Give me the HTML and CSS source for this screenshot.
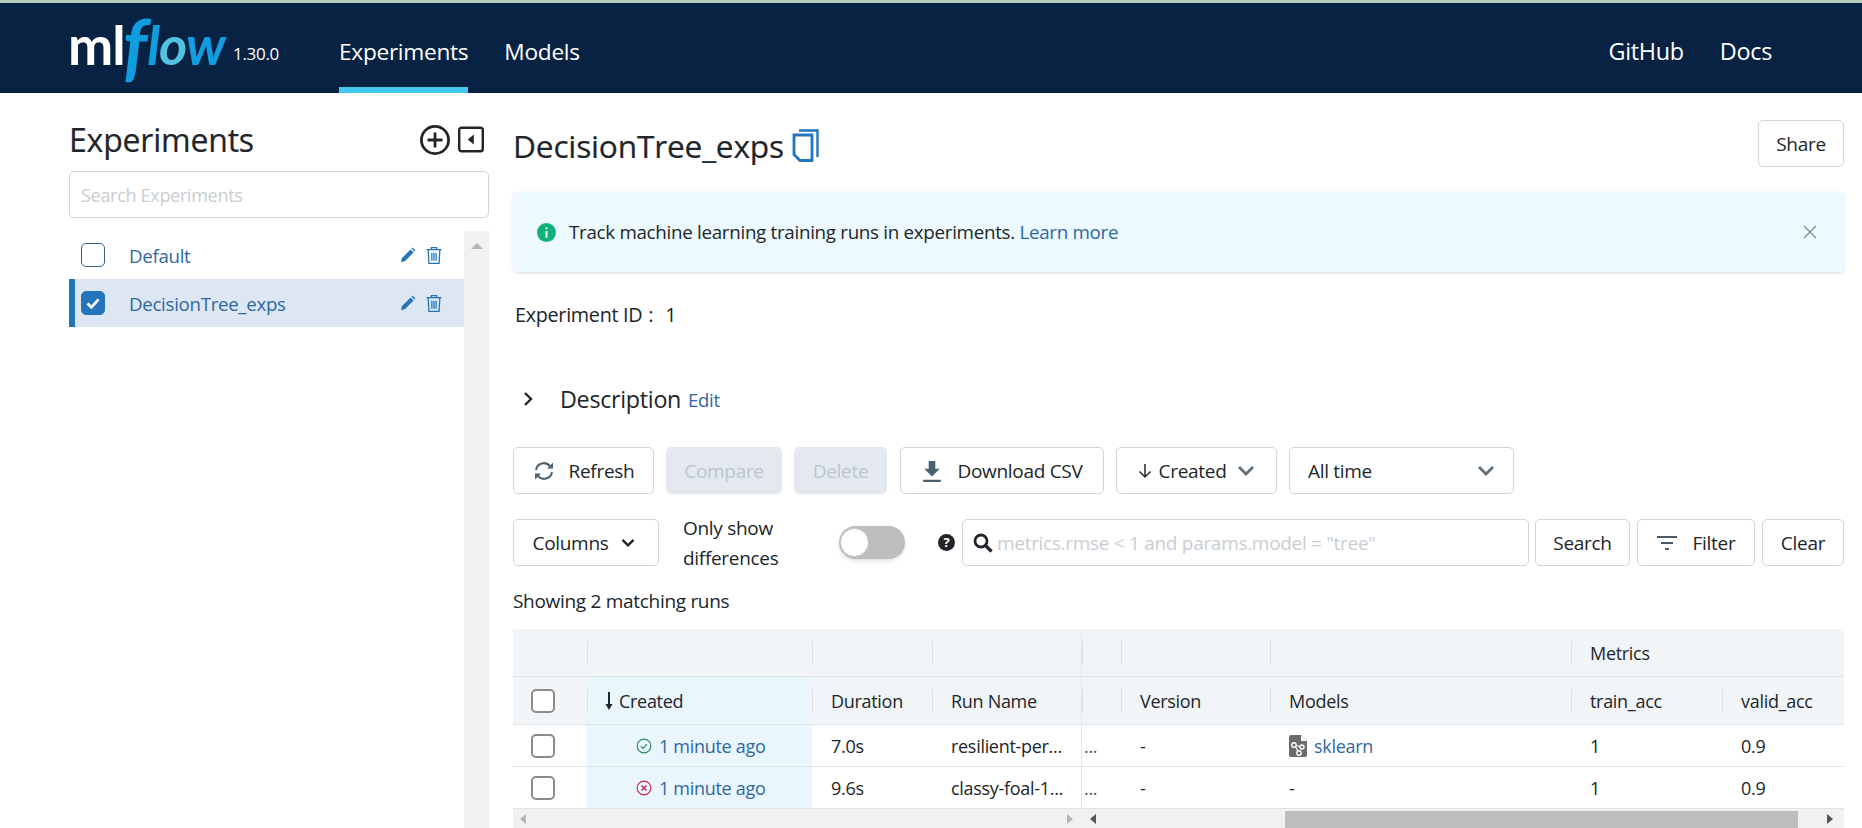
FILE: index.html
```html
<!DOCTYPE html>
<html lang="en">
<head>
<meta charset="utf-8">
<title>MLflow</title>
<link rel="stylesheet" href="styles.css">
</head>
<body>
<header class="topbar">
  <div class="logo"><span class="logo-ml">ml</span><span class="logo-f">f</span><span class="logo-low">l<span class="logo-o">o</span>w</span></div>
  <span class="version">1.30.0</span>
  <nav class="nav-left">
    <a class="nav-item active">Experiments</a>
    <a class="nav-item">Models</a>
  </nav>
  <nav class="nav-right">
    <a class="nav-item">GitHub</a>
    <a class="nav-item">Docs</a>
  </nav>
</header>
<div class="page">
  <aside class="sidebar">
    <div class="side-head">
      <h2 class="side-title">Experiments</h2>
      <div class="side-tools">
        <svg class="ic-plus" viewBox="0 0 30 30"><circle cx="15" cy="15" r="13.600" fill="none" stroke="#212529" stroke-width="2.800"/><path d="M15 7.500v15M7.500 15h15" stroke="#212529" stroke-width="2.800" fill="none"/></svg>
        <svg class="ic-collapse" viewBox="0 0 28 28"><rect x="1.300" y="1.300" width="25.400" height="25.400" rx="2.500" fill="none" stroke="#212529" stroke-width="2.600"/><path d="M17 8.500v11L10.500 14z" fill="#212529"/></svg>
      </div>
    </div>
    <div class="side-search">Search Experiments</div>
    <div class="side-list">
      <div class="side-rows">
        <div class="side-row">
          <span class="cb"></span><a class="side-name">Default</a>
          <svg class="ic-pencil" viewBox="0 0 16 16"><path d="M1 15l.8-3.800L10.600 2.400l3 3L4.800 14.200zM11.500 1.500l1-1 3 3-1 1z" fill="#2374bb"/></svg>
          <svg class="ic-trash" viewBox="0.500 1 15 16"><path d="M5.500 3V1.500h5V3M1 3.500h14M2.500 3.500l.7 13h9.600l.7-13M6 6.500v7.500M8 6.500v7.500M10 6.500v7.500" fill="none" stroke="#2374bb" stroke-width="1.200"/></svg>
        </div>
        <div class="side-row selected">
          <span class="cb checked"><svg viewBox="0 0 24 24"><path d="M6 12.500l4.200 4.200L18 8" fill="none" stroke="#fff" stroke-width="3"/></svg></span><a class="side-name">DecisionTree_exps</a>
          <svg class="ic-pencil" viewBox="0 0 16 16"><path d="M1 15l.8-3.800L10.600 2.400l3 3L4.800 14.200zM11.500 1.500l1-1 3 3-1 1z" fill="#2374bb"/></svg>
          <svg class="ic-trash" viewBox="0.500 1 15 16"><path d="M5.500 3V1.500h5V3M1 3.500h14M2.500 3.500l.7 13h9.600l.7-13M6 6.500v7.500M8 6.500v7.500M10 6.500v7.500" fill="none" stroke="#2374bb" stroke-width="1.200"/></svg>
        </div>
      </div>
      <div class="side-scroll"><span class="arrow-up"></span></div>
    </div>
  </aside>
  <main class="main">
    <div class="title-row">
      <h1 class="exp-title">DecisionTree_exps</h1>
      <svg class="ic-copy" viewBox="0 0 27 34"><path d="M7 2.500h18.500V29" fill="none" stroke="#2374bb" stroke-width="2.400"/><path d="M2 7h18v25.500H8L2 26.500z" fill="none" stroke="#2374bb" stroke-width="2.800"/></svg>
      <button class="btn share">Share</button>
    </div>
    <div class="alert">
      <svg class="ic-info" viewBox="0 0 20 20"><circle cx="10" cy="10" r="10" fill="#0fb27a"/><path d="M10 4.500v2M10 8.500v7" stroke="#fff" stroke-width="2" fill="none"/></svg>
      <span>Track machine learning training runs in experiments. <a class="link">Learn more</a></span>
      <svg class="ic-x" viewBox="0 0 14 14"><path d="M1 1l12 12M13 1L1 13" stroke="#7c8a90" stroke-width="1.300" fill="none"/></svg>
    </div>
    <div class="exp-id">Experiment ID<span class="exp-id-colon">:</span><span class="exp-id-val">1</span></div>
    <div class="desc">
      <svg class="ic-chev-r" viewBox="0 0 10 16"><path d="M2 2l6 6-6 6" fill="none" stroke="#212529" stroke-width="2.400"/></svg>
      <span class="desc-title">Description</span><a class="link desc-edit">Edit</a>
    </div>
    <div class="toolbar one">
      <button class="btn b-refresh"><svg class="ic-18" viewBox="0 0 22 22"><path d="M3 10a8 8 0 0 1 14-4M19 12a8 8 0 0 1-14 4" fill="none" stroke="#4a6272" stroke-width="2"/><path d="M20 2.500v6h-6zM2 19.500v-6h6z" fill="#4a6272"/></svg>Refresh</button>
      <button class="btn disabled b-compare">Compare</button>
      <button class="btn disabled b-delete">Delete</button>
      <button class="btn b-download"><svg class="ic-18" viewBox="0 0 20 20"><path d="M7 1h6v7h4l-7 7-7-7h4zM2 18h16v2H2z" fill="#4a6272"/></svg>Download CSV</button>
      <button class="btn b-created"><svg class="ic-down" viewBox="0 0 14 16"><path d="M7 1v13M1.500 8.500L7 14l5.500-5.500" fill="none" stroke="#212529" stroke-width="1.500"/></svg>Created<svg class="ic-caret" viewBox="0 0 18 12"><path d="M2 2l7 7 7-7" fill="none" stroke="#5f6f7c" stroke-width="2.800"/></svg></button>
      <button class="btn b-time"><span>All time</span><svg class="ic-caret" viewBox="0 0 18 12"><path d="M2 2l7 7 7-7" fill="none" stroke="#5f6f7c" stroke-width="2.800"/></svg></button>
    </div>
    <div class="toolbar two">
      <button class="btn b-columns">Columns<svg class="ic-caret small" viewBox="0 0 18 12"><path d="M2 2l7 7 7-7" fill="none" stroke="#212529" stroke-width="3"/></svg></button>
      <div class="only-show">Only show<br>differences</div>
      <span class="toggle"><span class="knob"></span></span>
      <span class="help">?</span>
      <div class="search-box">
        <svg class="ic-search" viewBox="0 0 20 20"><circle cx="8" cy="8" r="6" fill="none" stroke="#212529" stroke-width="2.800"/><path d="M12.500 12.500l6 6" stroke="#212529" stroke-width="3.200"/></svg>
        <span class="placeholder">metrics.rmse &lt; 1 and params.model = "tree"</span>
      </div>
      <button class="btn b-search">Search</button>
      <button class="btn b-filter"><svg class="ic-filter" viewBox="0 0 20 14"><path d="M0 1h20M4 7h12M8 13h4" stroke="#4a5a66" stroke-width="2" fill="none"/></svg>Filter</button>
      <button class="btn b-clear">Clear</button>
    </div>
    <div class="showing">Showing 2 matching runs</div>
    <div class="grid">
      <div class="c h1"></div><div class="c h1 sep"></div><div class="c h1 sep"></div><div class="c h1 sep pin"></div>
      <div class="c h1 sep"></div><div class="c h1 sep"></div><div class="c h1 sep"></div><div class="c h1 sep txt">Metrics</div><div class="c h1"></div>

      <div class="c h2 boxcell"><span class="box"></span></div>
      <div class="c h2 sep created-h"><svg class="ic-sort" viewBox="0 0 8 18"><path d="M4 0v15" stroke="#212529" stroke-width="2"/><path d="M0.500 12h7L4 18z" fill="#212529"/></svg>Created</div>
      <div class="c h2 sep txt">Duration</div>
      <div class="c h2 sep txt pin">Run Name</div>
      <div class="c h2 sep"></div>
      <div class="c h2 sep txt">Version</div>
      <div class="c h2 sep txt">Models</div>
      <div class="c h2 sep txt">train_acc</div>
      <div class="c h2 sep txt">valid_acc</div>

      <div class="c r boxcell"><span class="box"></span></div>
      <div class="c r created-c"><svg class="ic-status" viewBox="0 0 16 16"><circle cx="8" cy="8" r="6.800" fill="none" stroke="#2d8a55" stroke-width="1.200"/><path d="M4.800 8.200l2.200 2.200 4-4.200" fill="none" stroke="#2d8a55" stroke-width="1.200"/></svg><a class="link">1 minute ago</a></div>
      <div class="c r txt">7.0s</div>
      <div class="c r txt pin">resilient-per...</div>
      <div class="c r dots">...</div>
      <div class="c r txt">-</div>
      <div class="c r txt"><svg class="ic-model" viewBox="0 0 18 22"><path d="M2 0h10l6 6v14a2 2 0 0 1-2 2H2a2 2 0 0 1-2-2V2a2 2 0 0 1 2-2z" fill="#6b6b6b"/><path d="M12 0v6h6" fill="#fff"/><circle cx="5" cy="10" r="2.200" fill="none" stroke="#fff" stroke-width="1.400"/><circle cx="13" cy="12" r="2" fill="none" stroke="#fff" stroke-width="1.400"/><circle cx="10" cy="18" r="2.200" fill="none" stroke="#fff" stroke-width="1.400"/><path d="M6.500 11.500l2.500 5M7 10.500l4 1" stroke="#fff" stroke-width="1.200"/></svg><a class="link">sklearn</a></div>
      <div class="c r txt">1</div>
      <div class="c r txt">0.9</div>

      <div class="c r boxcell"><span class="box"></span></div>
      <div class="c r created-c"><svg class="ic-status" viewBox="0 0 16 16"><circle cx="8" cy="8" r="6.800" fill="none" stroke="#c8284f" stroke-width="1.200"/><path d="M5.500 5.500l5 5M10.500 5.500l-5 5" fill="none" stroke="#c8284f" stroke-width="1.500"/></svg><a class="link">1 minute ago</a></div>
      <div class="c r txt">9.6s</div>
      <div class="c r txt pin">classy-foal-1...</div>
      <div class="c r dots">...</div>
      <div class="c r txt">-</div>
      <div class="c r txt">-</div>
      <div class="c r txt">1</div>
      <div class="c r txt">0.9</div>
    </div>
    <div class="hscroll">
      <div class="hs-left"><span class="tri-l"></span><span class="tri-r faint"></span></div>
      <div class="hs-right"><span class="tri-l dark"></span><span class="thumb"></span><span class="tri-r dark"></span></div>
    </div>
  </main>
</div>
</body>
</html>
```
FILE: styles.css
```css
* { box-sizing: border-box; }
html, body { margin: 0; height: 828px; overflow: hidden; background: #fff; }
body { font-family: "Open Sans", "Noto Sans", sans-serif; font-size: 19px; color: #212529; letter-spacing: -0.3px; }
a { text-decoration: none; }
svg { display: block; flex: none; }
button { font-family: inherit; letter-spacing: inherit; }

.topbar { height: 93px; border-top: 3px solid #b3cbb9; background: #082244; display: flex; align-items: stretch; padding-left: 68px; color: #fff; }
.logo { width: 165px; display: flex; align-items: center; font-family: "Lato", sans-serif; font-weight: 700; font-size: 54px; line-height: 1; letter-spacing: -1px; margin-top: -6px; }
.logo-ml { color: #fff; }
.logo-f { color: #0f9de0; font-style: italic; font-size: 74px; margin-left: -2px; margin-right: 1px; }
.logo-low { color: #0f9de0; font-style: italic; }
.logo-o { color: #4fc3e0; }
.version { align-self: center; font-size: 17px; margin: 10px 0 0 0; width: 106px; letter-spacing: -0.3px; }
.nav-left, .nav-right { display: flex; gap: 36px; }
.nav-right { margin-left: auto; margin-right: 90px; }
.nav-item { display: flex; align-items: center; font-size: 22.700px; color: #fff; letter-spacing: -0.3px; padding-top: 12px; border-bottom: 6px solid transparent; }
.nav-right .nav-item { font-size: 23.400px; }
.nav-item.active { border-bottom-color: #43c9ed; }

.page { display: flex; height: 735px; padding: 0 18px 0 69px; gap: 24px; }
.sidebar { width: 420px; flex: none; display: flex; flex-direction: column; }
.side-head { height: 78px; flex: none; display: flex; justify-content: space-between; align-items: center; padding-bottom: 2px; }
.side-title { margin: 18px 0 0; font-size: 32px; font-weight: 400; letter-spacing: -0.2px; line-height: 1.2; -webkit-text-stroke: 0.2px #212529; }
.side-tools { display: flex; align-items: center; gap: 8px; margin-right: 5px; margin-top: 17px; }
.ic-plus { width: 30px; height: 30px; }
.ic-collapse { width: 26px; height: 27px; }
.side-search { height: 47px; flex: none; border: 1px solid #cfd5dc; border-radius: 5px; padding-left: 11px; display: flex; align-items: center; color: #c9cdd1; font-size: 18px; }
.side-list { margin-top: 13px; flex: 1; display: flex; }
.side-rows { flex: 1; }
.side-row { height: 48px; display: flex; align-items: center; padding-left: 12px; }
.side-row.selected { background: #dce7f3; border-left: 6px solid #2374bb; padding-left: 6px; }
.cb { width: 24px; height: 24px; border: 1px solid #2d5f8f; border-radius: 5px; background: #fff; flex: none; }
.cb.checked { background: #2374bb; border-color: #2374bb; }
.side-name { margin-left: 24px; color: #2f67a5; flex: 1; font-size: 18.700px; }
.ic-pencil { width: 16px; height: 16px; }
.ic-trash { width: 16px; height: 17px; margin: 0 22px 0 10px; }
.side-scroll { width: 25px; background: #f1f1f1; display: flex; justify-content: center; padding-top: 12px; }
.arrow-up { width: 0; height: 0; border: 6px solid transparent; border-top: 0; border-bottom: 6px solid #b5b5b5; }

.main { flex: 1; min-width: 0; display: flex; flex-direction: column; }
.main > * { flex: none; }
.title-row { height: 99px; display: flex; align-items: center; padding-top: 2px; }
.exp-title { margin: 5px 0 0; font-size: 31.700px; font-weight: 400; line-height: 1.2; letter-spacing: -0.2px; -webkit-text-stroke: 0.2px #212529; }
.ic-copy { width: 27px; height: 34px; margin: 3px 0 0 8px; }
.btn { height: 47px; border: 1px solid #cfd5dc; border-radius: 5px; background: #fff; font-size: 19px; color: #212529; display: flex; align-items: center; justify-content: center; padding: 0; flex: none; }
.share { width: 86px; margin-left: auto; }
.alert { height: 80px; background: #ecf9ff; border-radius: 4px; box-shadow: 0 1px 3px rgba(0,0,0,.14); display: flex; align-items: center; padding-left: 24px; font-size: 18.800px; }
.ic-info { width: 19px; height: 19px; margin-right: 13px; }
.ic-x { width: 14px; height: 14px; margin-left: auto; margin-right: 27px; }
.link { color: #2f67a5; }
.exp-id { margin-top: 30px; height: 26px; line-height: 26px; padding-left: 2px; font-size: 19.800px; }
.exp-id-colon { margin-left: 6px; }
.exp-id-val { margin-left: 12px; }
.desc { margin-top: 54px; height: 34px; display: flex; align-items: center; padding-left: 10px; }
.ic-chev-r { width: 10px; height: 16px; margin-right: 27px; }
.desc-title { font-size: 23.300px; }
.desc-edit { margin-left: 7px; font-size: 18.500px; }
.toolbar { display: flex; align-items: center; }
.toolbar.one { margin-top: 31px; gap: 12px; height: 47px; }
.toolbar.two { margin-top: 25px; height: 47px; }
.ic-18 { width: 22px; height: 22px; margin-right: 14px; }
.b-refresh { width: 141px; }
.b-compare { width: 116px; }
.b-delete { width: 93px; }
.b-download { width: 204px; margin-left: 1px; }
.b-created { width: 161px; }
.b-time { width: 225px; justify-content: space-between; padding: 0 18px; }
.disabled { background: #e3e9ef; border-color: #e3e9ef; color: #bcc6d0; }
.ic-down { width: 14px; height: 16px; margin-right: 7px; }
.ic-caret { width: 18px; height: 12px; margin-left: 11px; }
.ic-caret.small { width: 14px; height: 10px; margin-left: 12px; }
.b-columns { width: 146px; padding-right: 5px; }
.only-show { width: 180px; padding-left: 24px; line-height: 30px; }
.toggle { width: 66px; height: 33px; background: #bdbdbd; border-radius: 17px; position: relative; box-shadow: 0 2px 4px rgba(0,0,0,.12); }
.knob { position: absolute; left: 1px; top: 2px; width: 29px; height: 29px; border-radius: 50%; background: #fff; border: 1px solid #c5c5c5; }
.help { width: 17px; height: 17px; border-radius: 50%; background: #212529; color: #fff; font-size: 13px; font-weight: 700; line-height: 17px; text-align: center; margin-left: 33px; letter-spacing: 0; }
.search-box { margin-left: 7px; width: 567px; height: 47px; border: 1px solid #cfd5dc; border-radius: 5px; display: flex; align-items: center; padding-left: 10px; }
.ic-search { width: 20px; height: 20px; margin-right: 4px; }
.placeholder { color: #c9cdd1; }
.b-search { width: 95px; margin-left: 6px; }
.b-filter { width: 118px; margin-left: 7px; }
.ic-filter { width: 20px; height: 14px; margin-right: 16px; }
.b-clear { width: 82px; margin-left: 7px; }
.showing { margin-top: 22px; height: 26px; line-height: 26px; }

.grid { margin-top: 15px; display: grid; grid-template-columns: 74px 225px 120px 150px 39px 149px 301px 151px 122px; grid-template-rows: 48px 48px 42px 42px; font-size: 18px; }
.c { display: flex; align-items: center; min-width: 0; position: relative; white-space: nowrap; }
.h1, .h2 { background: #f1f5f8; border-bottom: 1px solid #e0e4e9; }
.r { border-bottom: 1px solid #e0e4e9; }
.sep::before { content: ""; position: absolute; left: 0; top: 12px; bottom: 12px; width: 1px; background: #dadfe4; }
.txt { padding-left: 19px; }
.boxcell { padding-left: 18px; }
.pin { border-right: 1px solid #e3e7ea; }
.box { width: 24px; height: 24px; border: 2px solid #8c8c8c; border-radius: 5px; background: #fff; }
.created-h { background: #eaf6fd; padding-left: 18px; }
.ic-sort { width: 8px; height: 18px; margin-right: 6px; }
.created-c { background: #eaf6fd; padding-left: 49px; }
.ic-status { width: 16px; height: 16px; margin-right: 7px; }
.dots { padding-left: 2px; color: #555; }
.ic-model { width: 18px; height: 22px; margin-right: 7px; }
.hscroll { height: 19px; display: flex; background: #f1f1f1; }
.hs-left { width: 569px; display: flex; justify-content: space-between; align-items: center; padding: 0 9px 0 7px; }
.hs-right { flex: 1; display: flex; align-items: center; padding: 0 11px 0 8px; }
.tri-l { width: 0; height: 0; border: 5px solid transparent; border-left: 0; border-right: 6px solid #b5b5b5; }
.tri-r { width: 0; height: 0; border: 5px solid transparent; border-right: 0; border-left: 6px solid #b5b5b5; }
.tri-l.dark { border-right-color: #555; }
.tri-r.dark { border-left-color: #555; }
.thumb { height: 17px; margin: 2px 29px 0 189px; width: 513px; background: #bdbdbd; flex: none; }
```
